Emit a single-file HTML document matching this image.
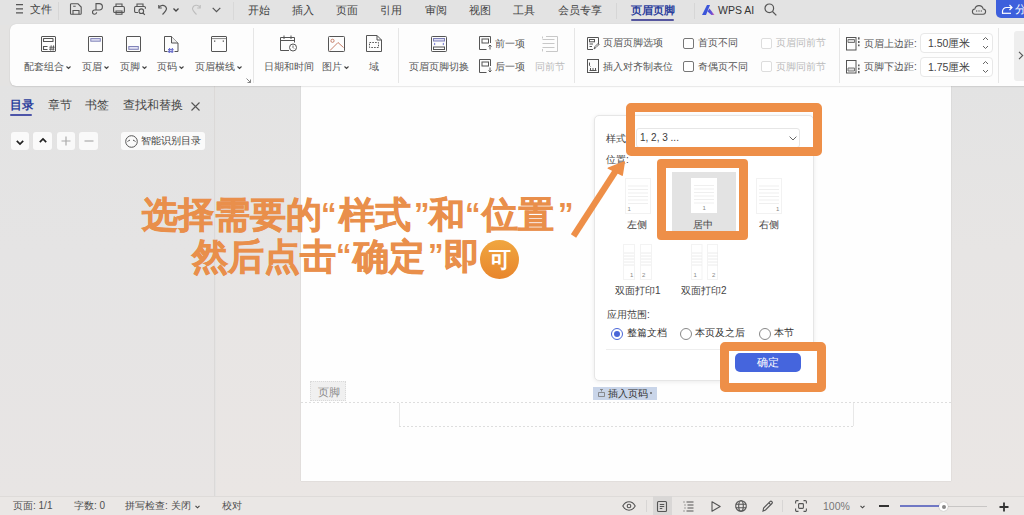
<!DOCTYPE html>
<html><head><meta charset="utf-8">
<style>
*{margin:0;padding:0;box-sizing:border-box}
html,body{width:1024px;height:515px;overflow:hidden;background:#e4e3e2;font-family:"Liberation Sans",sans-serif;color:#333}
.a{position:absolute;white-space:nowrap}
svg.a{overflow:visible}
#top{position:absolute;left:0;top:0;width:1024px;height:25px;background:#e3e3e3}
#ribbon{position:absolute;left:10px;top:24px;width:1030px;height:62px;background:#fdfdfd;border-radius:6px;box-shadow:0 0 1px rgba(0,0,0,.18),0 1px 1.5px rgba(0,0,0,.08)}
#left{position:absolute;left:0;top:86px;width:215px;height:410px;background:linear-gradient(180deg,#e3e3e3 0%,#e5e4e4 40%,#e8e5e4 100%);border-right:1px solid #dbd9d8}
#doc{position:absolute;left:216px;top:86px;width:808px;height:410px;background:linear-gradient(180deg,#e3e3e3 0%,#e7e5e4 40%,#eae6e4 100%)}
#page{position:absolute;left:301px;top:86px;width:650px;height:395px;background:#fefefe;box-shadow:0 0 1px rgba(0,0,0,.2)}
#status{position:absolute;left:0;top:496px;width:1024px;height:19px;background:#eae7e5;border-top:1px solid #dedbd9}
.t12{font-size:11px;line-height:14px;color:#444}
.t11{font-size:11px;line-height:13px}
.t10{font-size:10px;line-height:12px}
.rl{font-size:10px;line-height:12px;color:#555}
.dis{color:#bbb}
.sep{position:absolute;width:1px;background:#e6e6e6}
.chev{display:inline-block;width:5px;height:5px;margin-left:2px}
</style></head><body>
<div id="top"></div>
<div id="left"></div>
<div id="doc"></div>
<div id="page"></div>
<div id="status"></div>
<div id="ribbon"></div>

<!-- ===== top bar ===== -->
<svg class="a" style="left:16px;top:4px" width="8" height="10" viewBox="0 0 8 10"><path d="M0 .7h7M0 4.8h7M0 8.9h7" stroke="#555" stroke-width="1.3"/></svg>
<div class="a" style="left:29.5px;top:3px;font-size:10.5px;line-height:13px;color:#444">文件</div>
<div class="sep" style="left:58px;top:2px;height:18px;background:#d6d6d6"></div>
<!-- save -->
<svg class="a" style="left:70px;top:3px" width="12" height="12" viewBox="0 0 12 12" fill="none" stroke="#555" stroke-width="1.1"><path d="M1.5 .8h6.5l3.2 3.2v6.4a.9.9 0 0 1-.9.9H1.4a.9.9 0 0 1-.9-.9V1.6a.9.9 0 0 1 .9-.9z"/><path d="M3 11.2V7.5h6v3.7M3.2 3.2h2.5"/></svg>
<!-- share-ish -->
<svg class="a" style="left:92px;top:3px" width="11" height="12" viewBox="0 0 11 12" fill="none" stroke="#555" stroke-width="1.1"><path d="M4 7V.6h3.2a3.2 3.2 0 0 1 0 6.4H2.6a2.1 2.1 0 1 0 2.1 2.3"/></svg>
<!-- print -->
<svg class="a" style="left:113px;top:3px" width="12" height="12" viewBox="0 0 12 12" fill="none" stroke="#555" stroke-width="1.1"><path d="M3 3.5V1h6v2.5"/><rect x=".6" y="3.5" width="10.8" height="6" rx="1.3"/><path d="M3 8v3.2h6V8z"/></svg>
<!-- print preview -->
<svg class="a" style="left:134px;top:3px" width="12" height="12" viewBox="0 0 12 12" fill="none" stroke="#555" stroke-width="1.1"><path d="M3 3.5V1h6v2.5"/><path d="M4 9.5H1.8a1.2 1.2 0 0 1-1.2-1.2V4.7a1.2 1.2 0 0 1 1.2-1.2h8.4a1.2 1.2 0 0 1 1.2 1.2v1"/><circle cx="7.3" cy="8.2" r="2.3"/><path d="M9 10l1.8 1.8"/></svg>
<!-- undo -->
<svg class="a" style="left:158px;top:4px" width="10" height="11" viewBox="0 0 10 11" fill="none" stroke="#555" stroke-width="1.2"><path d="M1 3.5A4 4 0 0 1 8.5 4.5c0 2-2 4-4 6"/><path d="M.8 1v3h3"/></svg>
<svg class="a" style="left:173px;top:8px" width="6" height="4" viewBox="0 0 6 4"><path d="M.5 .5L3 3 5.5.5" stroke="#444" stroke-width="1.3" fill="none"/></svg>
<!-- redo (disabled) -->
<svg class="a" style="left:191px;top:4px" width="10" height="11" viewBox="0 0 10 11" fill="none" stroke="#bdbdbd" stroke-width="1.1"><path d="M9 3.5A4 4 0 0 0 1.5 4.5c0 2 2 4 4 6"/><path d="M9.2 1v3h-3"/></svg>
<svg class="a" style="left:212px;top:7px" width="9" height="6" viewBox="0 0 9 6"><path d="M.7 .8L4.5 4.6 8.3.8" stroke="#555" stroke-width="1.2" fill="none"/></svg>
<div class="sep" style="left:233px;top:2px;height:18px;background:#d8d8d8"></div>

<div class="a t12" style="left:247.5px;top:3px">开始</div>
<div class="a t12" style="left:291.5px;top:3px">插入</div>
<div class="a t12" style="left:335.5px;top:3px">页面</div>
<div class="a t12" style="left:379.5px;top:3px">引用</div>
<div class="a t12" style="left:424.5px;top:3px">审阅</div>
<div class="a t12" style="left:468.5px;top:3px">视图</div>
<div class="a t12" style="left:512.5px;top:3px">工具</div>
<div class="a t12" style="left:557.5px;top:3px">会员专享</div>
<div class="sep" style="left:616px;top:3px;height:16px;background:#d6d6d6"></div>
<div class="a" style="left:631px;top:4px;font-size:11px;line-height:13px;color:#2c3f9c;font-weight:bold">页眉页脚</div>
<div class="a" style="left:631px;top:19px;width:43px;height:1.6px;background:#55569f;border-radius:1px"></div>
<div class="sep" style="left:694px;top:3px;height:16px;background:#d6d6d6"></div>
<svg class="a" style="left:702px;top:5px" width="13" height="10" viewBox="0 0 13 10"><defs><linearGradient id="wg" x1="0" x2="1"><stop offset="0" stop-color="#3a4fd8"/><stop offset=".6" stop-color="#6b4fd6"/><stop offset="1" stop-color="#f06aa0"/></linearGradient></defs><path d="M0 10L5 0h3L4 10z" fill="#3b55d9"/><path d="M5.5 6.5l2-3L12.5 10h-3z" fill="url(#wg)"/></svg>
<div class="a" style="left:718px;top:4px;font-size:10.5px;line-height:13px;color:#333">WPS AI</div>
<svg class="a" style="left:764px;top:3px" width="13" height="13" viewBox="0 0 13 13" fill="none" stroke="#555" stroke-width="1.2"><circle cx="5.3" cy="5.3" r="4.3"/><path d="M8.5 8.5l3.8 3.8"/></svg>
<!-- cloud -->
<svg class="a" style="left:972px;top:4px" width="14" height="11" viewBox="0 0 14 11" fill="none" stroke="#555" stroke-width="1.1"><path d="M3.2 10.2h7.6a2.6 2.6 0 0 0 .4-5.2 4.3 4.3 0 0 0-8.4 0 2.6 2.6 0 0 0 .4 5.2z"/><circle cx="4.7" cy="7" r=".65" fill="#555" stroke="none"/><circle cx="7" cy="7" r=".65" fill="#555" stroke="none"/><circle cx="9.3" cy="7" r=".65" fill="#555" stroke="none"/></svg>
<div class="a" style="left:996px;top:-4px;width:40px;height:22px;background:#3d5fdc;border-radius:5px"></div>
<svg class="a" style="left:1001px;top:4px" width="12" height="10" viewBox="0 0 12 10" fill="none" stroke="#fff" stroke-width="1.2"><path d="M11 3.5H5.5A4 4 0 0 0 1.5 7.5v2"/><path d="M8.5 1l2.5 2.5L8.5 6"/><path d="M1 9.3h9"/></svg>
<div class="a" style="left:1015px;top:3px;font-size:11px;line-height:13px;color:#fff">分享</div>

<!-- ===== ribbon ===== -->
<!-- 配套组合 -->
<svg class="a" style="left:41px;top:36px" width="15" height="16" viewBox="0 0 15 16" fill="none" stroke="#555" stroke-width="1"><rect x=".5" y=".5" width="14" height="15" rx=".5"/><rect x="2.5" y="2.5" width="9.5" height="3" rx=".3" stroke-width="1.1"/><path d="M6.5 10.5h-4v3h4" stroke-width="1.1"/><path d="M10.2 9.4l-.5 5.2M12.6 9.4l-.5 5.2M8.3 11.2h5.4M8 13.2h5.4" stroke-width=".95"/></svg>
<div class="a rl" style="left:24px;top:61px">配套组合<svg class="chev" viewBox="0 0 5 5"><path d="M.5 1.5L2.5 3.5 4.5 1.5" stroke="#444" stroke-width="1.1" fill="none"/></svg></div>
<!-- 页眉 -->
<svg class="a" style="left:88px;top:36px" width="15" height="16" viewBox="0 0 15 16" fill="none" stroke="#555" stroke-width="1"><rect x=".5" y=".5" width="14" height="15" rx=".5"/><rect x="2.8" y="2.6" width="9.5" height="2.6" fill="#e2e2f4" stroke="#8083b8"/></svg>
<div class="a rl" style="left:82px;top:61px">页眉<svg class="chev" viewBox="0 0 5 5"><path d="M.5 1.5L2.5 3.5 4.5 1.5" stroke="#444" stroke-width="1.1" fill="none"/></svg></div>
<!-- 页脚 -->
<svg class="a" style="left:126px;top:36px" width="15" height="16" viewBox="0 0 15 16" fill="none" stroke="#555" stroke-width="1"><rect x=".5" y=".5" width="14" height="15" rx=".5"/><rect x="2.8" y="10.5" width="9.5" height="2.8" fill="#e2e2f4" stroke="#8083b8"/></svg>
<div class="a rl" style="left:120px;top:61px">页脚<svg class="chev" viewBox="0 0 5 5"><path d="M.5 1.5L2.5 3.5 4.5 1.5" stroke="#444" stroke-width="1.1" fill="none"/></svg></div>
<!-- 页码 -->
<svg class="a" style="left:164px;top:36px" width="15" height="18" viewBox="0 0 15 18" fill="none" stroke="#555" stroke-width="1"><path d="M3.5 15.5H.5V.5h7l6.5 6.5v8.5h-3.5"/><path d="M7.5 .5v6.5h6.5" fill="#eee"/><path d="M5.6 12l-.3 5M8.4 12l-.3 5M4 13.6h5.6M3.8 15.6h5.6" stroke="#6e72cc" stroke-width="1.2"/></svg>
<div class="a rl" style="left:157px;top:61px">页码<svg class="chev" viewBox="0 0 5 5"><path d="M.5 1.5L2.5 3.5 4.5 1.5" stroke="#444" stroke-width="1.1" fill="none"/></svg></div>
<!-- 页眉横线 -->
<svg class="a" style="left:211px;top:36px" width="16" height="16" viewBox="0 0 16 16" fill="none" stroke="#555" stroke-width="1"><rect x=".5" y=".5" width="15" height="15" rx=".5"/><path d="M1 2.6h14" stroke="#888"/><path d="M3 5.2h1.3M11.7 5.2H13" stroke-width="1.3"/></svg>
<div class="a rl" style="left:195px;top:61px">页眉横线<svg class="chev" viewBox="0 0 5 5"><path d="M.5 1.5L2.5 3.5 4.5 1.5" stroke="#444" stroke-width="1.1" fill="none"/></svg></div>
<svg class="a" style="left:246px;top:78px" width="5" height="5" viewBox="0 0 5 5"><path d="M.5 .5l4 4M1.5 4.5h3v-3" stroke="#777" stroke-width=".9" fill="none"/></svg>
<div class="sep" style="left:253px;top:28px;height:55px"></div>

<!-- 日期和时间 -->
<svg class="a" style="left:280px;top:35px" width="18" height="17" viewBox="0 0 18 17" fill="none" stroke="#555" stroke-width="1"><path d="M9 15.5H.5v-13h14v5"/><path d="M.5 5.5h14M4 .5v3.5M11 .5v3.5"/><circle cx="13" cy="12.5" r="3.5"/><path d="M13 10.5v2l1 1" stroke-width=".9"/></svg>
<div class="a rl" style="left:264px;top:61px">日期和时间</div>
<!-- 图片 -->
<svg class="a" style="left:328px;top:36px" width="17" height="16" viewBox="0 0 17 16" fill="none" stroke-width="1"><rect x=".5" y=".5" width="16" height="15" rx=".8" stroke="#555"/><circle cx="4.5" cy="4.8" r="1.6" stroke="#c7806a"/><path d="M2 14.5L10 6.5l5.5 5" stroke="#c7806a"/></svg>
<div class="a rl" style="left:322px;top:61px">图片<svg class="chev" viewBox="0 0 5 5"><path d="M.5 1.5L2.5 3.5 4.5 1.5" stroke="#444" stroke-width="1.1" fill="none"/></svg></div>
<!-- 域 -->
<svg class="a" style="left:366px;top:35px" width="16" height="17" viewBox="0 0 16 17" fill="none" stroke="#555" stroke-width="1"><path d="M.5 16.5V.5h10.5l4.5 4.5v11.5z"/><path d="M11 .5v4.5h4.5"/><rect x="3.5" y="7.5" width="9" height="5" stroke-dasharray="1.6 1.2"/></svg>
<div class="a rl" style="left:369px;top:61px">域</div>
<div class="sep" style="left:398px;top:28px;height:55px"></div>

<!-- 页眉页脚切换 -->
<svg class="a" style="left:431px;top:36px" width="16" height="16" viewBox="0 0 16 16" fill="none" stroke="#555" stroke-width="1"><rect x=".5" y=".5" width="15" height="15" rx=".8"/><rect x="2.5" y="2.5" width="11" height="2.5" fill="#dfe0f5" stroke="#7d7fb6"/><rect x="2.5" y="11" width="11" height="2.5"/><path d="M3 7l1.2 1L3 9M13 7l-1.2 1L13 9" stroke-width=".9" stroke="#6f73d0"/></svg>
<div class="a rl" style="left:409px;top:61px">页眉页脚切换</div>
<!-- 前一项 -->
<svg class="a" style="left:479px;top:36px" width="14" height="14" viewBox="0 0 14 14" fill="none" stroke="#555" stroke-width="1"><path d="M7.5 13.5H.5V.5h11v6.5"/><rect x="3" y="3" width="6.5" height="4"/><path d="M11 13.5V9M9.5 10.5L11 9l1.5 1.5"/></svg>
<div class="a rl" style="left:495px;top:38px">前一项</div>
<svg class="a" style="left:479px;top:59px" width="14" height="14" viewBox="0 0 14 14" fill="none" stroke="#555" stroke-width="1"><path d="M7.5 13.5H.5V.5h11v6.5"/><rect x="3" y="3" width="6.5" height="4"/><path d="M11 8.5V13M9.5 11.5L11 13l1.5-1.5"/></svg>
<div class="a rl" style="left:495px;top:61px">后一项</div>
<!-- 同前节 disabled -->
<svg class="a" style="left:542px;top:36px" width="16" height="16" viewBox="0 0 16 16" fill="none" stroke="#c8c8c8" stroke-width="1"><path d="M4 .5h11.5v15H4M.5 3.5h12M.5 7.5h12M.5 11.5h12"/><path d="M.5 .5v2M.5 13v2.5"/></svg>
<div class="a rl dis" style="left:535px;top:61px">同前节</div>
<div class="sep" style="left:574px;top:28px;height:55px"></div>

<!-- 页眉页脚选项 -->
<svg class="a" style="left:587px;top:37px" width="12" height="13" viewBox="0 0 12 13" fill="none" stroke="#555" stroke-width="1"><path d="M6 12.5H.5V.5h11v7"/><rect x="2.5" y="2.5" width="5" height="2.3"/><path d="M2.5 7h3.5M2.5 9.5h2.5"/><path d="M7 12l1-2.5 3-3 1 1-3 3z" stroke-width=".9"/></svg>
<div class="a rl" style="left:603px;top:37px">页眉页脚选项</div>
<svg class="a" style="left:587px;top:59px" width="12" height="14" viewBox="0 0 12 14" fill="none" stroke="#555" stroke-width="1"><rect x=".5" y=".5" width="11" height="13"/><path d="M2.5 3.5v3l1 1M2.5 11.5h7M3.5 9v2.5M6 9v2.5M8.5 9v2.5"/></svg>
<div class="a rl" style="left:603px;top:61px">插入对齐制表位</div>
<div class="a" style="left:683px;top:38px;width:11px;height:11px;border:1px solid #777;border-radius:2px;background:#fff"></div>
<div class="a rl" style="left:698px;top:37px">首页不同</div>
<div class="a" style="left:683px;top:61px;width:11px;height:11px;border:1px solid #777;border-radius:2px;background:#fff"></div>
<div class="a rl" style="left:698px;top:61px">奇偶页不同</div>
<div class="a" style="left:761px;top:38px;width:11px;height:11px;border:1px solid #ddd;border-radius:2px;background:#fff"></div>
<div class="a rl dis" style="left:776px;top:37px">页眉同前节</div>
<div class="a" style="left:761px;top:61px;width:11px;height:11px;border:1px solid #ddd;border-radius:2px;background:#fff"></div>
<div class="a rl dis" style="left:776px;top:61px">页脚同前节</div>
<div class="sep" style="left:839px;top:28px;height:55px"></div>

<!-- 边距 -->
<svg class="a" style="left:845.5px;top:36.5px" width="14" height="14" viewBox="0 0 14 14" fill="none" stroke="#555" stroke-width="1"><rect x=".5" y=".5" width="9.5" height="12.5"/><path d="M2 2.5h6.5v3H2z" fill="#ddd" stroke="#777"/><path d="M12.8 .3v2.2M12.8 4v2M12.8 7.5v1.8" stroke-width="1.5"/></svg>
<div class="a rl" style="left:864px;top:38px">页眉上边距:</div>
<div class="a" style="left:920px;top:33px;width:73px;height:20px;border:1px solid #e8e8e8;border-radius:4px;background:#fff"></div>
<div class="a rl" style="left:928px;top:37px;font-size:10.5px;color:#444">1.50厘米</div>
<svg class="a" style="left:982px;top:36px" width="7" height="14" viewBox="0 0 7 14" fill="none" stroke="#666" stroke-width="1"><path d="M1 4l2.5-2.5L6 4M1 10l2.5 2.5L6 10"/></svg>
<svg class="a" style="left:845.5px;top:59.5px" width="14" height="14" viewBox="0 0 14 14" fill="none" stroke="#555" stroke-width="1"><rect x=".5" y=".5" width="9.5" height="12.5"/><path d="M2 8h6.5v3H2z" fill="#ddd" stroke="#777"/><path d="M12.8 4.5v1.8M12.8 7.7v2M12.8 11v2.2" stroke-width="1.5"/></svg>
<div class="a rl" style="left:864px;top:61px">页脚下边距:</div>
<div class="a" style="left:920px;top:57px;width:73px;height:20px;border:1px solid #e8e8e8;border-radius:4px;background:#fff"></div>
<div class="a rl" style="left:928px;top:61px;font-size:10.5px;color:#444">1.75厘米</div>
<svg class="a" style="left:982px;top:60px" width="7" height="14" viewBox="0 0 7 14" fill="none" stroke="#666" stroke-width="1"><path d="M1 4l2.5-2.5L6 4M1 10l2.5 2.5L6 10"/></svg>
<div class="sep" style="left:998px;top:28px;height:55px"></div>
<div class="a" style="left:1014px;top:31px;width:14px;height:50px;background:#eeeeee;border-radius:3px"></div>
<svg class="a" style="left:1018px;top:51px" width="6" height="9" viewBox="0 0 6 9"><path d="M1 .8l3.7 3.7L1 8.2" stroke="#555" stroke-width="1.1" fill="none"/></svg>

<!-- ===== left panel ===== -->
<div class="a" style="left:10px;top:98px;font-size:11.5px;line-height:14px;color:#2c3f9c;font-weight:bold">目录</div>
<div class="a" style="left:10px;top:114px;width:22px;height:2px;background:#4d55a8;border-radius:1px"></div>
<div class="a" style="left:48px;top:98px;font-size:11.5px;line-height:14px;color:#444">章节</div>
<div class="a" style="left:85px;top:98px;font-size:11.5px;line-height:14px;color:#444">书签</div>
<div class="a" style="left:123px;top:98px;font-size:11.5px;line-height:14px;color:#444">查找和替换</div>
<svg class="a" style="left:191px;top:102px" width="9" height="9" viewBox="0 0 9 9"><path d="M.5 .5l8 8M8.5 .5l-8 8" stroke="#555" stroke-width="1.1"/></svg>
<div class="a" style="left:10.5px;top:132px;width:18.5px;height:18px;background:#fafafa;border-radius:3px"></div>
<svg class="a" style="left:15.5px;top:139.5px" width="8" height="5" viewBox="0 0 8 5"><path d="M.8 .8L4 4 7.2.8" stroke="#222" stroke-width="1.7" fill="none"/></svg>
<div class="a" style="left:33.3px;top:132px;width:18.5px;height:18px;background:#fafafa;border-radius:3px"></div>
<svg class="a" style="left:38.5px;top:138px" width="8" height="5" viewBox="0 0 8 5"><path d="M.8 4.2L4 1 7.2 4.2" stroke="#222" stroke-width="1.7" fill="none"/></svg>
<div class="a" style="left:56.8px;top:132px;width:18px;height:18px;background:#f9f9f9;border-radius:3px"></div>
<svg class="a" style="left:61px;top:136px" width="10" height="10" viewBox="0 0 10 10"><path d="M5 .5v9M.5 5h9" stroke="#aaa" stroke-width="1.2"/></svg>
<div class="a" style="left:79.4px;top:132px;width:18.4px;height:18px;background:#f9f9f9;border-radius:3px"></div>
<svg class="a" style="left:84px;top:136px" width="10" height="10" viewBox="0 0 10 10"><path d="M.5 5h9" stroke="#aaa" stroke-width="1.2"/></svg>
<div class="a" style="left:121px;top:132px;width:84px;height:18px;background:#fafafa;border-radius:3px"></div>
<svg class="a" style="left:125px;top:135px" width="13" height="13" viewBox="0 0 13 13" fill="none" stroke="#555" stroke-width="1"><circle cx="6.5" cy="6.5" r="5.8"/><path d="M2.6 6.8q1-1.8 2.4-1.6M10.4 6.8q-1-1.8-2.4-1.6"/></svg>
<div class="a" style="left:141px;top:135px;font-size:10px;line-height:12px;color:#444">智能识别目录</div>

<!-- ===== page content ===== -->
<div class="a" style="left:310px;top:381px;width:36px;height:20px;background:#f0f0f0;border:1px dotted #dadada"></div>
<div class="a" style="left:318px;top:386px;font-size:10.5px;line-height:12px;color:#8a8a8a">页脚</div>
<div class="a" style="left:301px;top:402px;width:651px;height:1px;background:repeating-linear-gradient(90deg,#dedede 0 2px,transparent 2px 4px)"></div>
<div class="a" style="left:399px;top:403px;width:1px;height:23px;background:#e8e8e8"></div><div class="a" style="left:853px;top:403px;width:1px;height:23px;background:#e8e8e8"></div><div class="a" style="left:399px;top:426px;width:455px;height:1px;background:repeating-linear-gradient(90deg,#dedede 0 2px,transparent 2px 4px)"></div>

<!-- ===== status bar ===== -->
<div class="a" style="left:13px;top:500px;font-size:10px;line-height:12px;color:#505050">页面: 1/1</div>
<div class="a" style="left:74px;top:500px;font-size:10px;line-height:12px;color:#505050">字数: 0</div>
<div class="a" style="left:125px;top:500px;font-size:10px;line-height:12px;color:#505050">拼写检查: 关闭</div>
<svg class="a" style="left:195px;top:505px" width="5" height="4" viewBox="0 0 5 4"><path d="M.5 .8L2.5 2.8 4.5.8" stroke="#444" stroke-width="1.1" fill="none"/></svg>
<div class="a" style="left:222px;top:500px;font-size:10px;line-height:12px;color:#505050">校对</div>
<!-- eye -->
<svg class="a" style="left:622px;top:501px" width="14" height="10" viewBox="0 0 14 10" fill="none" stroke="#555" stroke-width="1.1"><path d="M.8 5C2.5 2 4.5.8 7 .8S11.5 2 13.2 5C11.5 8 9.5 9.2 7 9.2S2.5 8 .8 5z"/><circle cx="7" cy="5" r="1.8"/></svg>
<div class="sep" style="left:646px;top:500px;height:12px;background:#d8d6d5"></div>
<div class="a" style="left:653px;top:496px;width:19px;height:19px;background:#d9d7d6"></div>
<svg class="a" style="left:657px;top:501px" width="10" height="11" viewBox="0 0 10 11" fill="none" stroke="#555" stroke-width="1.1"><rect x=".5" y=".5" width="9" height="10" rx="1"/><path d="M2.8 3.5h4.4M2.8 5.5h4.4M2.8 7.5h2.5"/></svg>
<svg class="a" style="left:683px;top:501px" width="11" height="11" viewBox="0 0 11 11" fill="none" stroke="#555" stroke-width="1.1"><path d="M3.5 1h7M4.5 4h6M4.5 7h6M3.5 10h7M.5 1h1M1.5 4h1M1.5 7h1M.5 10h1"/></svg>
<svg class="a" style="left:711px;top:501px" width="10" height="11" viewBox="0 0 10 11" fill="none" stroke="#555" stroke-width="1.1"><path d="M1 .8v9.4L9.2 5.5z" stroke-linejoin="round"/></svg>
<svg class="a" style="left:735px;top:500px" width="12" height="12" viewBox="0 0 12 12" fill="none" stroke="#555" stroke-width="1.1"><circle cx="6" cy="6" r="5.3"/><ellipse cx="6" cy="6" rx="2.3" ry="5.3"/><path d="M.7 4.3h10.6M.7 7.7h10.6"/></svg>
<svg class="a" style="left:762px;top:500px" width="11" height="12" viewBox="0 0 11 12" fill="none" stroke="#555" stroke-width="1.1"><path d="M1 11l.6-3L8 1.6a1.3 1.3 0 0 1 1.9 1.9L3.5 10z"/><path d="M6.8 2.8l1.9 1.9"/></svg>
<div class="sep" style="left:782px;top:500px;height:12px;background:#d8d6d5"></div>
<svg class="a" style="left:795px;top:500px" width="12" height="12" viewBox="0 0 12 12" fill="none" stroke="#555" stroke-width="1.1"><path d="M.6 3.5V1.8A1.2 1.2 0 0 1 1.8.6h1.7M8.5.6h1.7a1.2 1.2 0 0 1 1.2 1.2v1.7M11.4 8.5v1.7a1.2 1.2 0 0 1-1.2 1.2H8.5M3.5 11.4H1.8a1.2 1.2 0 0 1-1.2-1.2V8.5"/><rect x="3.6" y="3.6" width="4.8" height="4.8" rx=".8"/></svg>
<div class="a" style="left:823px;top:500px;font-size:10.5px;line-height:12px;color:#777">100%</div>
<svg class="a" style="left:860px;top:505px" width="5" height="4" viewBox="0 0 5 4"><path d="M.5 .8L2.5 2.8 4.5.8" stroke="#444" stroke-width="1.1" fill="none"/></svg>
<div class="a" style="left:879px;top:505px;width:10px;height:2px;background:#333"></div>
<div class="a" style="left:900px;top:506px;width:87px;height:1px;background:#c8c6c5"></div>
<div class="a" style="left:900px;top:505px;width:43px;height:2px;background:#7078c4"></div>
<div class="a" style="left:939px;top:502px;width:9px;height:9px;border-radius:50%;background:#fff;box-shadow:0 0 1px rgba(0,0,0,.4)"></div>
<div class="a" style="left:941.5px;top:504.5px;width:4px;height:4px;border-radius:50%;background:#888"></div>
<svg class="a" style="left:999px;top:502px" width="10" height="10" viewBox="0 0 10 10"><path d="M5 .5v9M.5 5h9" stroke="#333" stroke-width="1.8"/></svg>

<!-- ===== dialog ===== -->
<div class="a" style="left:594px;top:115px;width:220px;height:266px;background:#fff;border:1px solid #e6e6e6;border-radius:5px;box-shadow:0 1px 4px rgba(0,0,0,.08)"></div>
<div class="a t10" style="left:606px;top:133px;color:#444">样式</div>
<div class="a" style="left:636px;top:128px;width:164px;height:20px;border:1px solid #e6e6e6;border-radius:3px;background:#fff"></div>
<div class="a" style="left:640px;top:132px;font-size:10px;line-height:12px;color:#3a3a3a">1, 2, 3 ...</div>
<svg class="a" style="left:789px;top:136px" width="8" height="5" viewBox="0 0 8 5"><path d="M.6 .6L4 4 7.4.6" stroke="#666" stroke-width="1" fill="none"/></svg>
<div class="a t10" style="left:606px;top:154px;color:#444">位置:</div>

<!-- tiles row 1 -->
<svg class="a" style="left:625px;top:178px" width="26" height="36" viewBox="0 0 26 36"><rect x=".5" y=".5" width="25" height="35" fill="#fff" stroke="#f2f2f2"/><path d="M3 8h20M3 11.5h20M3 15h20M3 18.5h20M3 22h20M3 25.5h20" stroke="#efefef"/><text x="2.5" y="32.5" font-size="6" fill="#888" font-family="Liberation Sans">1</text></svg>
<div class="a t10" style="left:627px;top:219px;color:#444">左侧</div>
<div class="a" style="left:672px;top:171.5px;width:64px;height:62px;background:#e3e3e3"></div>
<svg class="a" style="left:690.5px;top:178.3px" width="26" height="35" viewBox="0 0 26 35"><rect x="0" y="0" width="26" height="35" fill="#fff"/><path d="M3 7.5h20M3 11h20M3 14.5h20M3 18h20M3 21.5h20M3 25h20" stroke="#efefef"/><text x="11.5" y="32" font-size="6" fill="#888" font-family="Liberation Sans">1</text></svg>
<div class="a t10" style="left:693px;top:219px;color:#444">居中</div>
<svg class="a" style="left:756px;top:178px" width="26" height="36" viewBox="0 0 26 36"><rect x=".5" y=".5" width="25" height="35" fill="#fff" stroke="#f2f2f2"/><path d="M3 8h20M3 11.5h20M3 15h20M3 18.5h20M3 22h20M3 25.5h20" stroke="#efefef"/><text x="20" y="32.5" font-size="6" fill="#888" font-family="Liberation Sans">1</text></svg>
<div class="a t10" style="left:759px;top:219px;color:#444">右侧</div>

<!-- tiles row 2 -->
<svg class="a" style="left:623px;top:244px" width="30" height="36" viewBox="0 0 30 36"><rect x=".5" y=".5" width="11" height="35" fill="#fff" stroke="#f3f3f3"/><rect x="17.5" y=".5" width="11" height="35" fill="#fff" stroke="#f3f3f3"/><path d="M1 9h10M1 12h10M1 15h10M1 18h10M1 21h10M18 9h10M18 12h10M18 15h10M18 18h10M18 21h10" stroke="#ececec"/><text x="7" y="33" font-size="6" fill="#888" font-family="Liberation Sans">1</text><text x="19" y="33" font-size="6" fill="#888" font-family="Liberation Sans">2</text></svg>
<div class="a t10" style="left:615px;top:285px;color:#444">双面打印1</div>
<svg class="a" style="left:691px;top:244px" width="30" height="36" viewBox="0 0 30 36"><rect x=".5" y=".5" width="10.5" height="35" fill="#fff" stroke="#f3f3f3"/><rect x="16.5" y=".5" width="10" height="35" fill="#fff" stroke="#f3f3f3"/><path d="M1 9h10M1 12h10M1 15h10M1 18h10M1 21h10M17 9h10M17 12h10M17 15h10M17 18h10M17 21h10" stroke="#ececec"/><text x="2.5" y="33" font-size="6" fill="#888" font-family="Liberation Sans">1</text><text x="21" y="33" font-size="6" fill="#888" font-family="Liberation Sans">2</text></svg>
<div class="a t10" style="left:681px;top:285px;color:#444">双面打印2</div>

<div class="a t10" style="left:607px;top:309px;color:#444">应用范围:</div>
<div class="a" style="left:611px;top:328px;width:12px;height:12px;border:1px solid #4a66d8;border-radius:50%;background:#fff"></div>
<div class="a" style="left:614px;top:331px;width:6px;height:6px;border-radius:50%;background:#4a66d8"></div>
<div class="a t10" style="left:627px;top:327px;color:#333">整篇文档</div>
<div class="a" style="left:680px;top:328px;width:12px;height:12px;border:1px solid #888;border-radius:50%;background:#fff"></div>
<div class="a t10" style="left:695px;top:327px;color:#333">本页及之后</div>
<div class="a" style="left:759px;top:328px;width:12px;height:12px;border:1px solid #888;border-radius:50%;background:#fff"></div>
<div class="a t10" style="left:774px;top:327px;color:#333">本节</div>
<div class="a" style="left:606px;top:349px;width:196px;height:1px;background:#eeeeee"></div>
<div class="a" style="left:735px;top:353px;width:66px;height:19px;background:#4565dd;border-radius:5px"></div>
<div class="a t10" style="left:758px;top:356px;color:#fff">确定</div>

<div class="a" style="left:593px;top:387px;width:64px;height:13px;background:#c9d5e9"></div>
<svg class="a" style="left:598px;top:389px" width="7" height="8" viewBox="0 0 7 8" fill="none" stroke="#777" stroke-width=".8"><path d="M2 .5h3M3.5.5v2M.5 3.5h6M.5 7.5h6M.5 3.5v4M6.5 3.5v4"/></svg>
<div class="a" style="left:608px;top:388px;font-size:10px;line-height:12px;color:#333">插入页码</div>
<div class="a" style="left:650px;top:392px;width:2px;height:2px;background:#666;border-radius:1px"></div>

<!-- ===== annotations ===== -->
<div class="a" style="left:626.4px;top:102.9px;width:196px;height:53.5px;border:9.4px solid #ee8f48;border-top-width:9.7px;border-radius:5px"></div>
<div class="a" style="left:657.2px;top:158.8px;width:90.6px;height:81px;border:9px solid #ee8f48;border-radius:4px"></div>
<div class="a" style="left:720px;top:342.3px;width:105.5px;height:50px;border:9px solid #ee8f48;border-radius:5px;background:#fff"></div>
<div class="a" style="left:735px;top:353px;width:66px;height:19px;background:#4565dd;border-radius:5px"></div>
<div class="a t10" style="left:757px;top:356px;font-size:10.5px;color:#fff">确定</div>
<svg class="a" style="left:560px;top:150px" width="80" height="100" viewBox="0 0 80 100"><path d="M13.5 86L57 19" stroke="#ee8f48" stroke-width="6.3" stroke-linecap="butt"/><path d="M64.3 12L48.3 18.2 62.2 25.2z" fill="#ee8f48" stroke="#ee8f48" stroke-width="1.5" stroke-linejoin="round"/></svg>

<!-- ===== big orange text ===== -->
<div class="a" style="left:142px;top:193px;font-size:36px;line-height:44px;font-weight:bold;color:#e98f4b;-webkit-text-stroke:.7px #e98f4b">选择需要的</div>
<div class="a" style="left:321px;top:196.5px;font-size:31px;line-height:36px;font-weight:bold;color:#e98f4b">“</div>
<div class="a" style="left:339px;top:193px;font-size:36px;line-height:44px;font-weight:bold;color:#e98f4b;-webkit-text-stroke:.7px #e98f4b">样式</div>
<div class="a" style="left:414px;top:196.5px;font-size:31px;line-height:36px;font-weight:bold;color:#e98f4b">”</div>
<div class="a" style="left:429px;top:193px;font-size:36px;line-height:44px;font-weight:bold;color:#e98f4b;-webkit-text-stroke:.7px #e98f4b">和</div>
<div class="a" style="left:465px;top:196.5px;font-size:31px;line-height:36px;font-weight:bold;color:#e98f4b">“</div>
<div class="a" style="left:482px;top:193px;font-size:36px;line-height:44px;font-weight:bold;color:#e98f4b;-webkit-text-stroke:.7px #e98f4b">位置</div>
<div class="a" style="left:558px;top:196.5px;font-size:31px;line-height:36px;font-weight:bold;color:#e98f4b">”</div>
<div class="a" style="left:192px;top:235px;font-size:36px;line-height:44px;font-weight:bold;color:#e98f4b;-webkit-text-stroke:.7px #e98f4b">然后点击</div>
<div class="a" style="left:336px;top:237.5px;font-size:31px;line-height:36px;font-weight:bold;color:#e98f4b">“</div>
<div class="a" style="left:353px;top:235px;font-size:36px;line-height:44px;font-weight:bold;color:#e98f4b;-webkit-text-stroke:.7px #e98f4b">确定</div>
<div class="a" style="left:428px;top:237.5px;font-size:31px;line-height:36px;font-weight:bold;color:#e98f4b">”</div>
<div class="a" style="left:444px;top:235px;font-size:36px;line-height:44px;font-weight:bold;color:#e98f4b;-webkit-text-stroke:.7px #e98f4b">即</div>
<div class="a" style="left:480px;top:240px;width:39px;height:39px;border-radius:50%;background:linear-gradient(180deg,#f0a640,#e8862c)"></div>
<div class="a" style="left:489px;top:247px;font-size:22px;line-height:26px;font-weight:bold;color:#fff">可</div>

</body></html>
